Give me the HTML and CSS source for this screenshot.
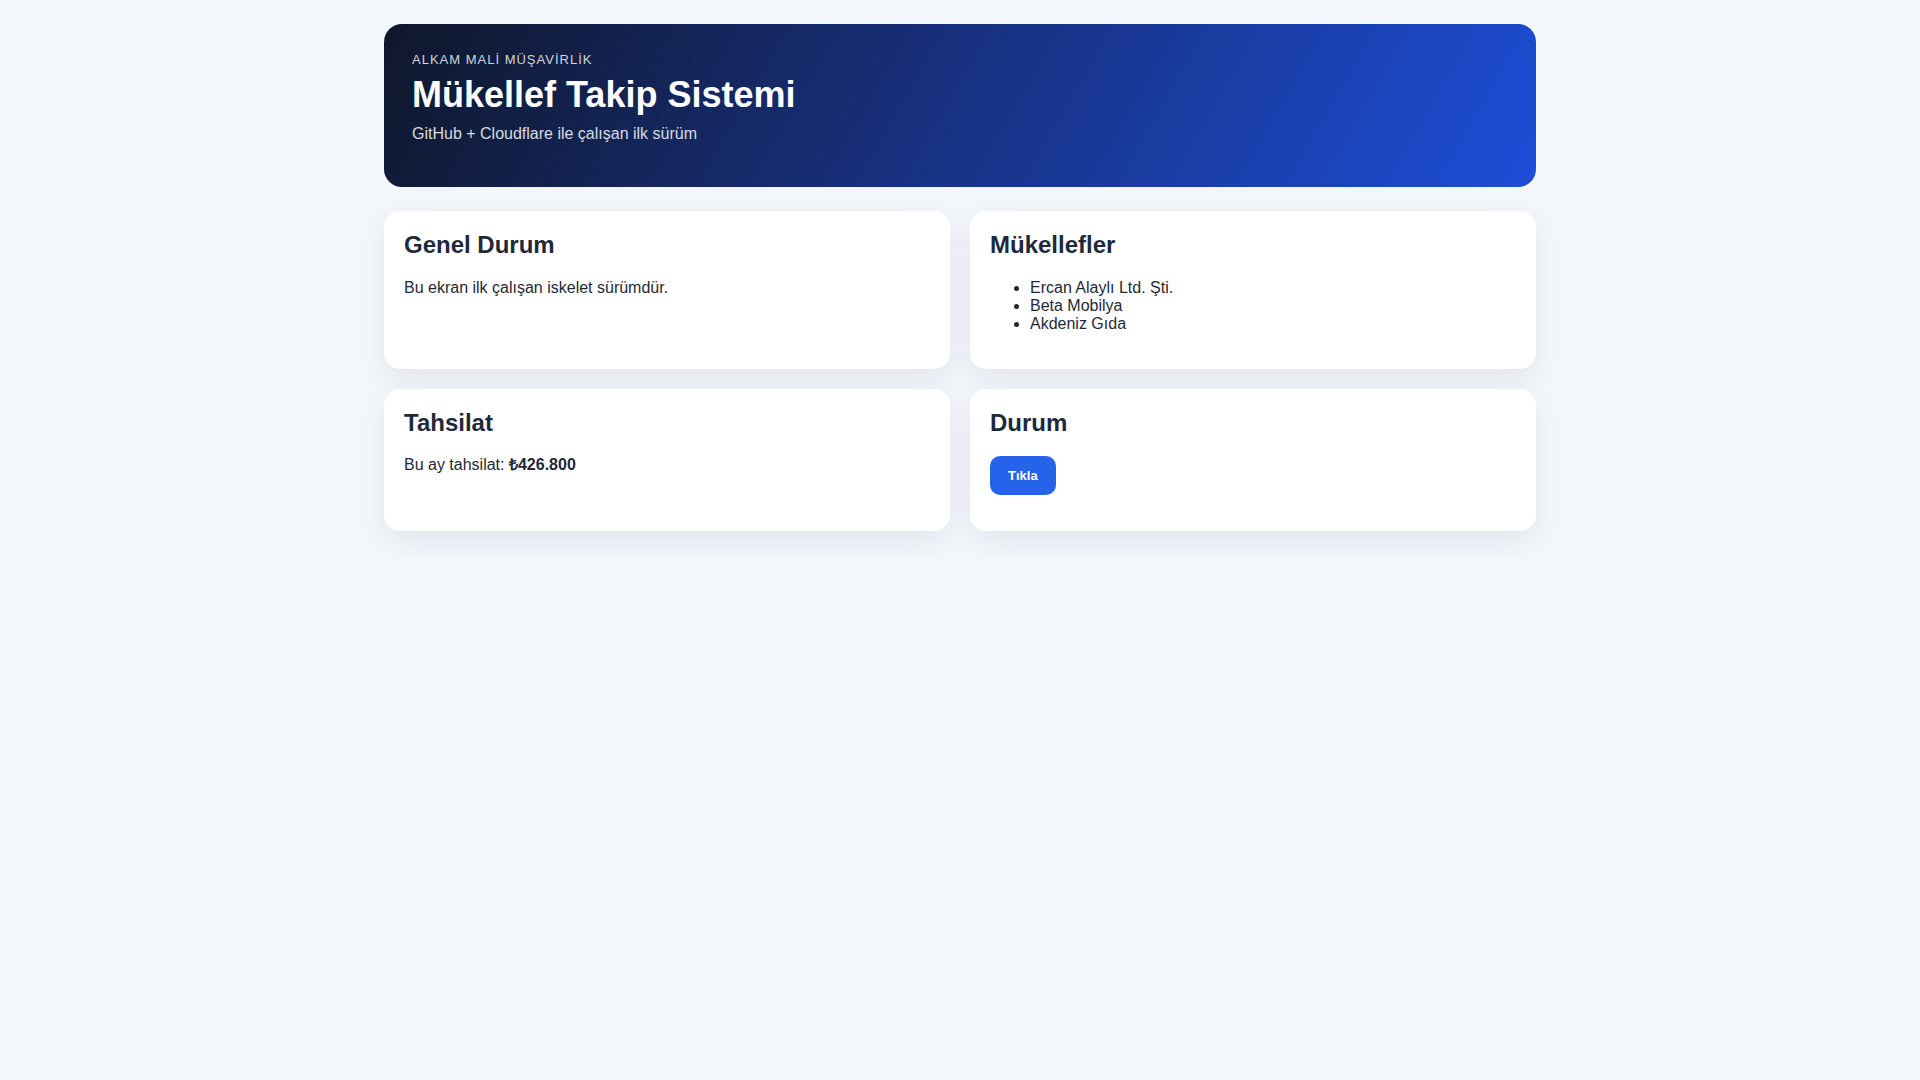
FILE: index.html
```html
<!DOCTYPE html>
<html lang="tr">
<head>
<meta charset="utf-8">
<title>Mükellef Takip Sistemi</title>
<link rel="stylesheet" href="styles.css">
</head>
<body>
<div class="wrap">
  <header class="hero">
    <div class="eyebrow">ALKAM MALİ MÜŞAVİRLİK</div>
    <h1 class="hero-title">Mükellef Takip Sistemi</h1>
    <p class="hero-sub">GitHub + Cloudflare ile çalışan ilk sürüm</p>
  </header>
  <main class="grid">
    <section class="card">
      <h2>Genel Durum</h2>
      <p>Bu ekran ilk çalışan iskelet sürümdür.</p>
    </section>
    <section class="card">
      <h2>Mükellefler</h2>
      <ul>
        <li>Ercan Alaylı Ltd. Şti.</li>
        <li>Beta Mobilya</li>
        <li>Akdeniz Gıda</li>
      </ul>
    </section>
    <section class="card">
      <h2>Tahsilat</h2>
      <p class="amount">Bu ay tahsilat: <strong>₺426.800</strong></p>
    </section>
    <section class="card">
      <h2>Durum</h2>
      <p class="actions"><button class="btn" type="button">Tıkla</button></p>
    </section>
  </main>
</div>
</body>
</html>
```
FILE: styles.css
```css
* { box-sizing: border-box; }
html, body {
  margin: 0;
  padding: 0;
  background: #f3f6fb;
  font-family: "Liberation Sans", Arial, sans-serif;
  color: #1f2937;
}
.wrap {
  max-width: 1152px;
  margin: 24px auto;
}
.hero {
  background: linear-gradient(120deg, #0f172a 0%, #172f7a 45%, #1d4ed8 100%);
  color: #ffffff;
  border-radius: 18px;
  padding: 28px;
  height: 163px;
}
.eyebrow {
  font-size: 13px;
  letter-spacing: 1px;
  line-height: 15px;
  color: rgba(255, 255, 255, 0.82);
}
.hero-title {
  font-size: 36px;
  font-weight: 700;
  margin: 7px 0 0;
  line-height: 41px;
}
.hero-sub {
  margin: 10px 0 0;
  font-size: 16px;
  line-height: 18px;
  color: rgba(255, 255, 255, 0.85);
}
.grid {
  display: grid;
  grid-template-columns: 1fr 1fr;
  gap: 20px;
  margin-top: 24px;
}
.card {
  background: #ffffff;
  border-radius: 16px;
  padding: 20px;
  box-shadow: 0 10px 30px rgba(15, 23, 42, 0.07);
}
.card h2 {
  margin: 0 0 20px;
  font-size: 24px;
  font-weight: 700;
  color: #1e293b;
  line-height: 27.6px;
}
.card p {
  margin: 0 0 16px;
  font-size: 16px;
  line-height: 18.4px;
  color: #1f2937;
}
.card p.amount {
  margin-top: 3px;
}
.card ul {
  margin: 0 0 15px;
  padding-left: 40px;
  font-size: 16px;
  line-height: 18.4px;
  color: #1f2937;
}
.card p.actions {
  margin: 3px 0 16px;
  line-height: 0;
}
.btn {
  font-family: "Liberation Sans", Arial, sans-serif;
  font-size: 13px;
  font-weight: 700;
  color: #ffffff;
  background: #2563eb;
  border: 0;
  border-radius: 10px;
  padding: 0 18px;
  height: 39px;
  line-height: 39px;
  cursor: pointer;
}
```
